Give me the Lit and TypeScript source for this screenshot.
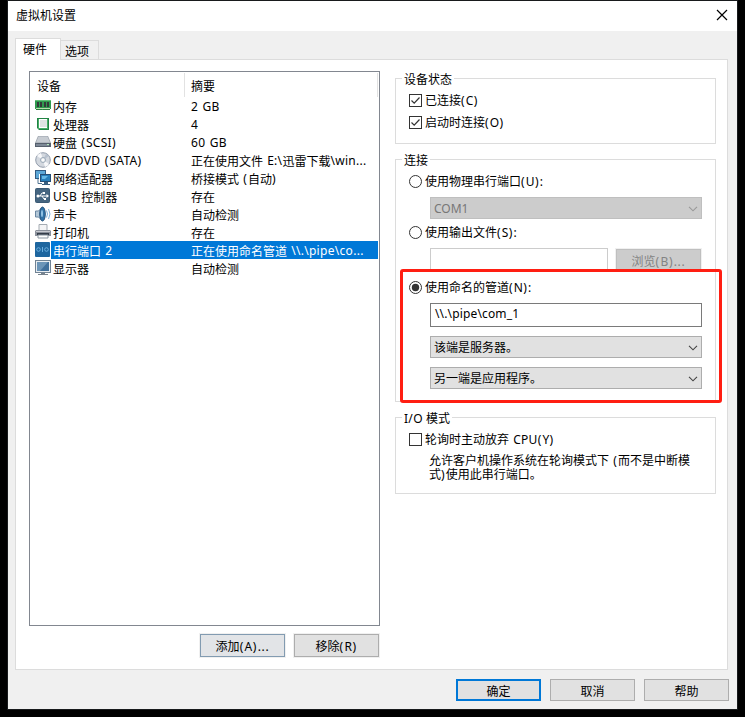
import { LitElement, html, css, svg } from "lit";
import { customElement } from "lit/decorators.js";
import { classMap } from "lit/directives/class-map.js";

// Latin runs get their own spacing, so that they sit like Tahoma beside 12px ideographs.
const mix = (text: string) =>
  text
    .split(/([\x21-\x7e][\x20-\x7e]*[\x21-\x7e]|[\x21-\x7e])/)
    .filter((part) => part)
    .map((part) =>
      /[\x21-\x7e]/.test(part)
        ? html`<span class="lat">${part.split(/([()])/).map((p) => (p === "(" || p === ")" ? html`<span class="par">${p}</span>` : p))}</span>`
        : part
    );

const textStyles = css`
  * { box-sizing: border-box; }
  .lat { letter-spacing: 0.3px; }
  .par { letter-spacing: 1.2px; }
`;

const icons: Record<string, unknown> = {
  memory: svg`<path d="M0 2h16v9h-1v1H1v-1H0z" fill="#2f9a4e"/><path d="M0 2h16v1H0z" fill="#63c07a"/><path d="M2 4h2v5H2zM5 4h2v5H5zM9 4h2v5H9zM12 4h2v5h-2z" fill="#333b3a"/><path d="M1 10h14v1H1z" fill="#b9dfae"/><path d="M1 11h6v1H1zM8 11h7v1H8z" fill="#2a7d3e"/>`,
  cpu: svg`<rect x="2" y="2" width="12" height="12" fill="#218344"/><rect x="3" y="3" width="10" height="10" fill="#48ad68"/><rect x="4" y="3" width="8" height="9" fill="#fff"/><rect x="5" y="4" width="7" height="7" fill="#dfe3e3"/><path d="M2 12l2 2H2z" fill="#fff"/>`,
  disk: svg`<path d="M3 2h10l3 7v4H0V9z" fill="#9ba3ac"/><path d="M3.500 2.500h9l2.500 6H1z" fill="#c7ccd2"/><path d="M0 9h16v4H0z" fill="#56606d"/><path d="M1 10h13v2H1z" fill="#7d8896"/><path d="M12 10h2v1h-2z" fill="#b5edbb"/>`,
  disc: svg`<circle cx="8" cy="8" r="7.300" fill="#d3d8df" stroke="#929cab"/><path d="M8 8L2 4a7 7 0 0 1 4-3z" fill="#f7f8fa"/><path d="M8 8l6 4a7 7 0 0 1-4 3z" fill="#f7f8fa"/><path d="M8 8l6-4a7 7 0 0 0-3-2z" fill="#b7c1ce"/><circle cx="8" cy="8" r="2.500" fill="#edf0f2" stroke="#9ba9b8"/><circle cx="8" cy="8" r="1" fill="#fff"/>`,
  network: svg`<rect x=".5" y=".5" width="10" height="8" fill="#5ca7d7" stroke="#315b83"/><path d="M3 9v4.500h4" fill="none" stroke="#527492"/><rect x="4" y="4" width="12" height="9" fill="#fff"/><rect x="5.500" y="4.500" width="10" height="7" fill="#287fbb" stroke="#254e76"/><path d="M7 6h6l-3 3H7z" fill="#67b9e6"/><path d="M9 12h4v2H9zM7 14h8v1H7z" fill="#395f80"/>`,
  usb: svg`<rect x=".5" y=".5" width="14" height="14" rx="1" fill="#456580" stroke="#3b5a75"/><path d="M3 8h9M5 8l2-3h2M7 8l2 3h2" fill="none" stroke="#fff"/><circle cx="3" cy="8" r="1.500" fill="#fff"/><path d="M11.500 6l2.500 2-2.500 2zM8 4h2v2H8zM9 10h2v2H9z" fill="#fff"/>`,
  sound: svg`<path d="M.5 5h3l4-4v14l-4-4h-3z" fill="#b3c7d7" stroke="#6a86a1"/><ellipse cx="7.500" cy="8" rx="2.800" ry="7" fill="#2f73a8" stroke="#28547d"/><ellipse cx="7" cy="7.500" rx="1" ry="3.500" fill="#91c3e5"/><path d="M11.500 4.500q2 3.500 0 7M13.500 3q3 5 0 10" fill="none" stroke="#7fb2da"/>`,
  printer: svg`<path d="M4 .5h8v7H4z" fill="#f4f4f5" stroke="#a4abb2"/><path d="M1 6h14l1 1v5H0V7z" fill="#8a909b"/><path d="M1 7h14v1H1z" fill="#c7c9cf"/><path d="M2 9h12v2H2z" fill="#343c48"/><path d="M3 11h10v3H3z" fill="#fff" stroke="#8995a0"/>`,
  serial: svg`<rect width="15" height="15" rx="1" fill="#1e669f"/><g fill="none" stroke="#6aaede"><circle cx="3.500" cy="7.500" r="1.800"/><circle cx="11.500" cy="7.500" r="1.800"/><path d="M7.500 5v5"/></g>`,
  display: svg`<rect x=".5" y=".5" width="15" height="12" fill="#e8edf1" stroke="#718394"/><path d="M2 2h12v9H2z" fill="#41709c"/><path d="M2 2h11l-8 9H2z" fill="#6c95b8"/><path d="M6 13h4v1H6zM3 14h10v1H3z" fill="#76828d"/>`,
};

const devices = [
  ["memory", "内存", "2 GB"],
  ["cpu", "处理器", "4"],
  ["disk", "硬盘 (SCSI)", "60 GB"],
  ["disc", "CD/DVD (SATA)", "正在使用文件 E:\\迅雷下载\\win..."],
  ["network", "网络适配器", "桥接模式 (自动)"],
  ["usb", "USB 控制器", "存在"],
  ["sound", "声卡", "自动检测"],
  ["printer", "打印机", "存在"],
  ["serial", "串行端口 2", "正在使用命名管道 \\\\.\\pipe\\co..."],
  ["display", "显示器", "自动检测"],
];

@customElement("device-list")
class DeviceList extends LitElement {
  static styles = [textStyles, css`
    :host { display: block; box-sizing: border-box; width: 351px; height: 555px; border: 1px solid #828790; background: #fff; }
    .head { display: grid; grid-template-columns: 155px 193px; height: 25px; padding-top: 1px; }
    .head div { border-right: 1px solid #e2e2e2; line-height: 28px; padding-left: 7px; height: 24px; }
    .head div + div { padding-left: 6px; }
    .row { display: grid; grid-template-columns: 16px 140px 187px; height: 18px; padding-left: 5px; line-height: 22px; white-space: pre; }
    .row svg { display: block; width: 16px; height: 16px; margin-top: 1px; }
    .name, .info { height: 18px; }
    .name { padding-left: 2px; word-spacing: 1px; }
    .info { word-spacing: 1px; }
    .lat { vertical-align: 1px; line-height: 0; }
    .on .name, .on .info { background: #0078d7; color: #fff; }
  `];
  render() {
    return html`
      <div class="head"><div>设备</div><div>摘要</div></div>
      ${devices.map(([icon, name, info]) => html`
        <div class=${classMap({ row: true, on: icon === "serial" })}>
          <svg viewBox="0 0 16 16">${icons[icon]}</svg><span class="name">${mix(name)}</span><span class="info">${mix(info)}</span>
        </div>`)}
    `;
  }
}

@customElement("app-root")
class AppRoot extends LitElement {
  static styles = [textStyles, css`
    :host { display: block; box-sizing: border-box; height: 717px; padding: 1px 8px 8px; background: #000; overflow: hidden; color: #000;
      font: 12px/18px "Noto Sans", "Noto Sans CJK SC", sans-serif; }
    .window { width: 729px; height: 708px; background: #f0f0f0; box-shadow: 0 0 0 1px #181a1c; }
    .title { height: 30px; background: #fff; display: flex; justify-content: space-between; padding: 0 9px 0 8px; line-height: 30px; }
    .title svg { width: 12px; height: 12px; margin-top: 8px; }
    .tabs { display: flex; align-items: flex-end; height: 28px; padding-left: 7px; }
    .tab { border: 1px solid #dcdcdc; border-bottom: 0; width: 38px; height: 19px; line-height: 21px; padding-left: 4px; border-left: 0; }
    .tab.active { position: relative; width: 46px; height: 22px; margin-bottom: -1px; background: #fff; line-height: 22px; padding-left: 7px; border-left: 1px solid #dcdcdc; }
    .panel { margin-left: 7px; width: 713px; height: 611px; border: 1px solid #dcdcdc; background: #fff; display: flex; padding: 11px 0 0 13px; gap: 15px; }
    .under { display: flex; justify-content: flex-end; gap: 9px; margin-top: 8px; padding-right: 1px; }
    .btn { width: 85px; height: 22px; border: 1px solid #adadad; background: #e1e1e1; text-align: center; line-height: 23px; }
    .under .btn { outline: 1px solid #f0f0f0; height: 23px; }
    .under .lat, .off .lat { letter-spacing: 0.7px; }
    .btn.hot { border-color: #829bb1; background: #e2e4e7; }
    .btn.main { border: 2px solid #0078d7; line-height: 21px; }
    .btn.off { border-color: #bfbfbf; background: #ccc; color: #838383; outline: 1px solid #f0f0f0; margin-top: 1px; }
    .footer { display: flex; gap: 9px; justify-content: flex-end; padding: 9px 8px 0 0; }
    .settings { width: 321px; padding-top: 7px; }
    .group { border: 1px solid #dcdcdc; width: 321px; padding-left: 13px; }
    .legend { width: fit-content; height: 18px; line-height: 20px; background: #fff; margin: -9px 0 0 -7px; padding: 0 2px; }
    .group { display: flow-root; }
    .state { height: 66px; margin-bottom: 15px; }
    .link { height: 243px; margin-bottom: 15px; }
    .io { height: 77px; }
    .opt { display: flex; align-items: center; height: 23px; gap: 3px; white-space: pre; word-spacing: 1px; }
    .opt span { line-height: 19px; }
    .opt svg { width: 13px; height: 13px; flex: none; }
    .legend + .opt { margin-top: 1px; }
    .opt + .opt { margin-top: -1px; }
    .field { margin-left: 21px; width: 272px; height: 22px; border: 1px solid #adadad; background: #e1e1e1; display: flex; justify-content: space-between; align-items: center; padding: 1px 3px 0; }
    .field svg { width: 10px; height: 6px; }
    .field.off { background: #ccc; border-color: #bfbfbf; color: #777; margin-top: 4px; margin-bottom: 2px; }
    .field.off .lat { letter-spacing: 0; }
    .files { display: flex; gap: 8px; margin: 4px 0 0 21px; height: 21px; }
    .file { width: 178px; height: 22px; border: 1px solid #ccc; background: #fff; }
    .pipe { position: absolute; left: 400px; top: 269px; width: 322px; height: 134px; border: 3px solid #ff1e12; border-radius: 3px; }
    .named { margin-top: 7px; }
    .field.text { background: #fff; border-color: #7a7a7a; height: 24px; margin: 4px 0 9px 21px; padding: 0 4px 2px; }
    .text .lat { letter-spacing: 0.15px; }
    .field.second { margin-top: 9px; }
    .hint { margin: 3px 0 0 20px; width: 275px; line-height: 14px; white-space: pre; word-spacing: 1px; }
  `];
  check(on: boolean) {
    return html`<svg viewBox="0 0 13 13"><rect x=".5" y=".5" width="12" height="12" fill="#fff" stroke="#333"/>${on ? svg`<path d="M2.500 6.500l2.700 2.700 5.300-5.700" fill="none" stroke="#333" stroke-width="1.200"/>` : ""}</svg>`;
  }
  radio(on: boolean) {
    return html`<svg viewBox="0 0 13 13"><circle cx="6.500" cy="6.500" r="6" fill="#fff" stroke="#333"/>${on ? svg`<circle cx="6.500" cy="6.500" r="3.700" fill="#333"/>` : ""}</svg>`;
  }
  chevron(color: string) {
    return html`<svg viewBox="0 0 10 6"><path d="M1 .8l4 4 4-4" fill="none" stroke=${color} stroke-width="1.100"/></svg>`;
  }
  render() {
    return html`
      <div class="window">
        <div class="title"><span>虚拟机设置</span><svg viewBox="0 0 12 12"><path d="M1 1l10 10M11 1L1 11" stroke="#000" stroke-width="1.200"/></svg></div>
        <div class="tabs"><div class="tab active">硬件</div><div class="tab">选项</div></div>
        <div class="panel">
          <div>
            <device-list></device-list>
            <div class="under"><div class="btn hot">${mix("添加(A)...")}</div><div class="btn">${mix("移除(R)")}</div></div>
          </div>
          <div class="settings">
            <div class="group state">
              <div class="legend">设备状态</div>
              <div class="opt">${this.check(true)}<span>${mix("已连接(C)")}</span></div>
              <div class="opt">${this.check(true)}<span>${mix("启动时连接(O)")}</span></div>
            </div>
            <div class="group link">
              <div class="legend">连接</div>
              <div class="opt">${this.radio(false)}<span>${mix("使用物理串行端口(U):")}</span></div>
              <div class="field off"><span>${mix("COM1")}</span>${this.chevron("#999")}</div>
              <div class="opt">${this.radio(false)}<span>${mix("使用输出文件(S):")}</span></div>
              <div class="files"><div class="file"></div><div class="btn off">${mix("浏览(B)...")}</div></div>
              <div class="opt named">${this.radio(true)}<span>${mix("使用命名的管道(N):")}</span></div>
              <div class="field text"><span>${mix("\\\\.\\pipe\\com_1")}</span></div>
              <div class="field"><span>该端是服务器。</span>${this.chevron("#444")}</div>
              <div class="field second"><span>另一端是应用程序。</span>${this.chevron("#444")}</div>
            </div>
            <div class="group io">
              <div class="legend">${mix("I/O 模式")}</div>
              <div class="opt">${this.check(false)}<span>${mix("轮询时主动放弃 CPU(Y)")}</span></div>
              <div class="hint">${mix("允许客户机操作系统在轮询模式下 (而不是中断模")}<br>${mix("式)使用此串行端口。")}</div>
            </div>
          </div>
        </div>
        <div class="footer"><div class="btn main">确定</div><div class="btn">取消</div><div class="btn">帮助</div></div>
      </div>
      <div class="pipe"></div>
    `;
  }
}
